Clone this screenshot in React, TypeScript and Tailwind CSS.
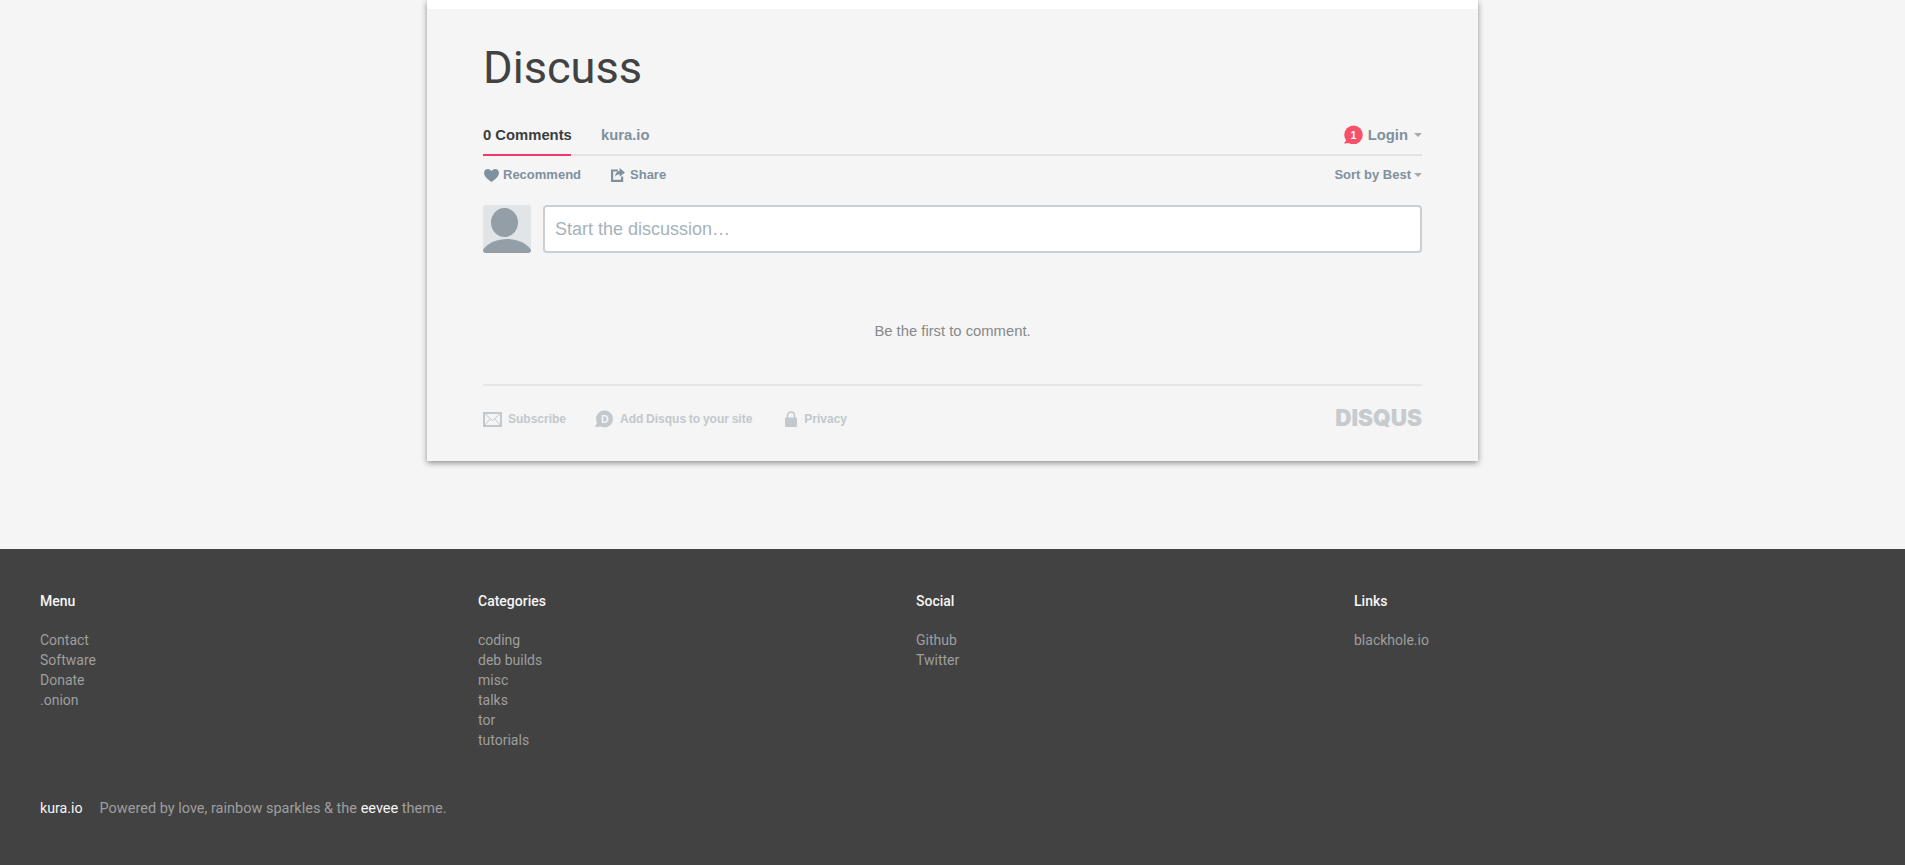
const menu = ["Contact", "Software", "Donate", ".onion"];
const categories = ["coding", "deb builds", "misc", "talks", "tor", "tutorials"];
const social = ["Github", "Twitter"];
const links = ["blackhole.io"];

function Caret({ className }: { className: string }) {
  return <span className={`inline-block h-0 w-0 border-x-[4px] border-t-[4px] border-x-transparent border-t-[#a5aaae] ${className}`} />;
}

function FooterColumn({ title, items }: { title: string; items: string[] }) {
  return (
    <div className="w-[438px] shrink-0">
      <h4 className="mb-[19px] text-[14px] leading-[20px] font-medium text-[#f5f5f5]">{title}</h4>
      <ul className="text-[14px] leading-[20px] text-[#9e9e9e]">
        {items.map((i) => (
          <li key={i}>{i}</li>
        ))}
      </ul>
    </div>
  );
}

function Thread() {
  return (
    <div className="font-['Liberation_Sans',sans-serif]">
      <div className="flex h-[42px] items-end border-b-2 border-[#e1e4e6]">
        <div className="-mb-[2px] h-[42px] w-[88px] border-b-2 border-[#f0376f] pt-[11px] text-[14.8px] leading-[20px] font-bold whitespace-nowrap text-[#3a3e40]">
          0 Comments
        </div>
        <div className="ml-[30px] h-[40px] pt-[11px] text-[14.8px] leading-[20px] font-bold text-[#7f919e]">kura.io</div>
        <div className="ml-auto flex h-[40px] items-center pt-[1px]">
          <svg width="20" height="20" viewBox="0 0 20 20" className="mr-[5px]">
            <circle cx="10.5" cy="9.8" r="9.3" fill="#f8506a" />
            <path d="M1 18.5 L5 12 L8 18 Z" fill="#f8506a" />
            <text x="10.5" y="13.5" textAnchor="middle" fontSize="10" fontWeight="700" fill="#fff" fontFamily="Liberation Sans">
              1
            </text>
          </svg>
          <span className="text-[14.8px] leading-[20px] font-bold text-[#7f919e]">Login</span>
          <Caret className="ml-[6px]" />
        </div>
      </div>

      <div className="mb-[11px] flex h-[38px] items-center justify-between text-[13px] font-bold text-[#7f919e]">
        <div className="flex items-center">
          <svg width="15" height="13" viewBox="0 0 16 14" fill="#7f919e" className="mr-[4px] ml-[1px]">
            <path d="M8 14 C5 11.5 0 8.5 0 4.2 C0 1.7 1.8 0 4 0 C5.7 0 7.2 1 8 2.4 C8.8 1 10.3 0 12 0 C14.2 0 16 1.7 16 4.2 C16 8.5 11 11.5 8 14 Z" />
          </svg>
          <span>Recommend</span>
          <svg width="14" height="14" viewBox="0 0 14 14" fill="#7f919e" className="mr-[5px] ml-[30px]">
            <path d="M0 1.5 H7 V3.6 H2.2 V11.8 H10 V8.5 H12.2 V14 H0 Z" />
            <path d="M8.6 0 L14 4.4 L8.6 8.8 V6.2 C6.6 6.2 5.2 7 4 9 C4.2 5.6 6 3.2 8.6 2.8 Z" />
          </svg>
          <span>Share</span>
        </div>
        <div className="flex items-center">
          <span>Sort by Best</span>
          <Caret className="ml-[3px]" />
        </div>
      </div>

      <div className="flex gap-[12px]">
        <svg width="48" height="48" viewBox="0 0 48 48" className="shrink-0 rounded-[3px]">
          <rect width="48" height="48" fill="#e1e5e8" />
          <ellipse cx="21.5" cy="17.5" rx="13.5" ry="14.5" fill="#939ea6" />
          <ellipse cx="24" cy="54" rx="27" ry="20" fill="#939ea6" />
        </svg>
        <div className="flex h-[48px] flex-1 items-center rounded-[4px] border-2 border-[#c9cfd3] bg-white pl-[10px] text-[18px] text-[#a5b2bb]">
          Start the discussion…
        </div>
      </div>

      <p className="mt-[68px] text-center text-[14.8px] leading-[20px] text-[#85898b]">Be the first to comment.</p>

      <div className="mt-[43px] flex h-[64px] items-start justify-between border-t-2 border-[#e4e6e8] pt-[24px] text-[12px] leading-[18px] font-bold text-[#c2c8cc]">
        <div className="flex items-center">
          <svg width="19" height="15" viewBox="0 0 19 15" fill="none" stroke="#c2c8cc" className="mr-[6px]">
            <rect x="1" y="1" width="17" height="13" strokeWidth="2" />
            <path d="M1.5 1.5 L9.5 8.5 L17.5 1.5 M1.5 13.5 L7 7 M17.5 13.5 L12 7" strokeWidth="1" />
          </svg>
          <span>Subscribe</span>
          <svg width="18" height="18" viewBox="0 0 18 18" className="mr-[7px] ml-[29px]">
            <circle cx="9.5" cy="9" r="8.5" fill="#c2c8cc" />
            <path d="M0 17 L3 11 L6 16.5 Z" fill="#c2c8cc" />
            <text x="9.9" y="12.7" textAnchor="middle" fontSize="10.5" fontWeight="700" fill="#f5f5f5" fontFamily="Liberation Sans">
              D
            </text>
          </svg>
          <span className="[word-spacing:-0.6px]">Add Disqus to your site</span>
          <svg width="12" height="16" viewBox="0 0 12 16" className="mr-[7px] ml-[33px]">
            <path d="M2.5 8 V4.5 C2.5 2.5 4 1 6 1 C8 1 9.5 2.5 9.5 4.5 V8" fill="none" stroke="#c2c8cc" strokeWidth="1.6" />
            <rect y="6.5" width="12" height="9.5" rx="1" fill="#c2c8cc" />
          </svg>
          <span>Privacy</span>
        </div>
        <span className="-mt-[3px] font-['Inter',sans-serif] text-[22.5px] leading-[22px] font-black text-[#c7cbce]">DISQUS</span>
      </div>
    </div>
  );
}

export default function App() {
  return (
    <div className="min-h-[865px] bg-[#f5f5f5]">
      <main className="mx-auto h-[549px] w-[1051px]">
        <div className="h-[461px] bg-[#f5f5f5] shadow-[0_2px_6px_rgba(0,0,0,0.42)]">
          <div className="h-[9px] bg-white" />
          <div className="px-[56px] pt-[33px]">
            <h1 className="mb-[21px] font-['Roboto',sans-serif] text-[45.2px] leading-[51px] text-[#424242]">Discuss</h1>
            <Thread />
          </div>
        </div>
      </main>

      <footer className="h-[316px] bg-[#424242] px-[40px] pt-[42px] font-['Roboto',sans-serif]">
        <div className="flex h-[207px]">
          <FooterColumn title="Menu" items={menu} />
          <FooterColumn title="Categories" items={categories} />
          <FooterColumn title="Social" items={social} />
          <FooterColumn title="Links" items={links} />
        </div>
        <p className="text-[14.5px] leading-[20px] text-[#9e9e9e]">
          <span className="mr-[17px] text-[14.2px] text-[#f5f5f5]">kura.io</span>
          Powered by love, rainbow sparkles &amp; the <span className="text-[#f5f5f5]">eevee</span> theme.
        </p>
      </footer>
    </div>
  );
}
